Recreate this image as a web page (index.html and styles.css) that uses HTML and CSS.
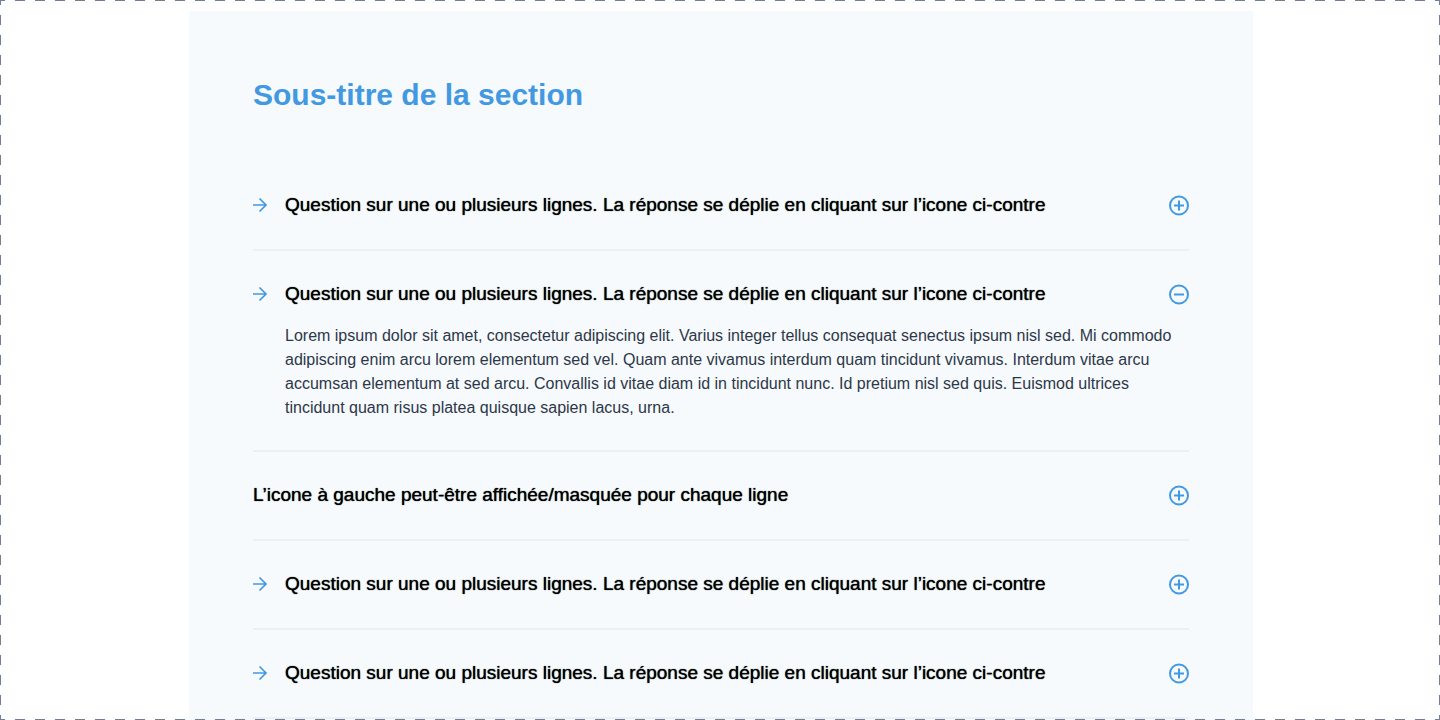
FILE: index.html
```
<!DOCTYPE html>
<html lang="fr">
<head>
  <meta charset="UTF-8">
  <meta name="viewport" content="width=device-width, initial-scale=1">
  <title>Questions / réponses</title>
  <link rel="stylesheet" href="styles.css">
</head>
<body>
  <!-- Icônes partagées -->
  <svg class="sprite" aria-hidden="true">
    <symbol id="arrow" viewBox="0 0 16 16">
      <path d="M0 8h13M6.5 1.5L13 8l-6.5 6.5"/>
    </symbol>
    <symbol id="plus" viewBox="0 0 20 21">
      <circle cx="10" cy="10.5" r="9"/>
      <path d="M5 10.5h10M10 5.5v10"/>
    </symbol>
    <symbol id="minus" viewBox="0 0 20 21">
      <circle cx="10" cy="10.5" r="9"/>
      <path d="M5 10.5h10"/>
    </symbol>
  </svg>

  <main class="frame">
    <section class="faq">
      <h2 class="faq-title">Sous-titre de la section</h2>

      <div class="faq-item">
        <button type="button" class="question" aria-expanded="false">
          <svg class="icon-arrow"><use href="#arrow"/></svg>
          <span class="question-text">Question sur une ou plusieurs lignes. La réponse se déplie en cliquant sur l’icone ci-contre</span>
          <svg class="icon-toggle"><use href="#plus"/></svg>
        </button>
      </div>

      <div class="faq-item">
        <button type="button" class="question" aria-expanded="true" aria-controls="answer-2">
          <svg class="icon-arrow"><use href="#arrow"/></svg>
          <span class="question-text">Question sur une ou plusieurs lignes. La réponse se déplie en cliquant sur l’icone ci-contre</span>
          <svg class="icon-toggle"><use href="#minus"/></svg>
        </button>
        <p class="answer" id="answer-2">Lorem ipsum dolor sit amet, consectetur adipiscing elit. Varius integer tellus consequat senectus ipsum nisl sed. Mi commodo adipiscing enim arcu lorem elementum sed vel. Quam ante vivamus interdum quam tincidunt vivamus. Interdum vitae arcu accumsan elementum at sed arcu. Convallis id vitae diam id in tincidunt nunc. Id pretium nisl sed quis. Euismod ultrices tincidunt quam risus platea quisque sapien lacus, urna.</p>
      </div>

      <!-- Ligne sans icône à gauche -->
      <div class="faq-item">
        <button type="button" class="question" aria-expanded="false">
          <span class="question-text">L’icone à gauche peut-être affichée/masquée pour chaque ligne</span>
          <svg class="icon-toggle"><use href="#plus"/></svg>
        </button>
      </div>

      <div class="faq-item">
        <button type="button" class="question" aria-expanded="false">
          <svg class="icon-arrow"><use href="#arrow"/></svg>
          <span class="question-text">Question sur une ou plusieurs lignes. La réponse se déplie en cliquant sur l’icone ci-contre</span>
          <svg class="icon-toggle"><use href="#plus"/></svg>
        </button>
      </div>

      <div class="faq-item">
        <button type="button" class="question" aria-expanded="false">
          <svg class="icon-arrow"><use href="#arrow"/></svg>
          <span class="question-text">Question sur une ou plusieurs lignes. La réponse se déplie en cliquant sur l’icone ci-contre</span>
          <svg class="icon-toggle"><use href="#plus"/></svg>
        </button>
      </div>
    </section>
  </main>
</body>
</html>
```

FILE: styles.css
```
* {
  box-sizing: border-box;
}
body {
  margin: 0;
  background-color: #fff;
  font-family: "Helvetica Neue", "Liberation Sans", Arial, sans-serif;
}
.sprite {
  display: none;
}

/* Cadre en pointillés autour de la page */
.frame {
  position: relative;
  height: 100vh;
  padding: 11px 10px 0 12px;
  overflow: hidden;
}
.frame::after {
  content: "";
  position: absolute;
  inset: 0;
  pointer-events: none;
  --dash-x: linear-gradient(90deg, #718096 5px, transparent 5px 15px, #718096 15px);
  --dash-y: linear-gradient(#718096 5px, transparent 5px 15px, #718096 15px);
  background:
    var(--dash-x) top left / 20px 1px repeat-x,
    var(--dash-x) bottom left / 20px 1px repeat-x,
    var(--dash-y) top left / 1px 20px repeat-y,
    var(--dash-y) top right / 1px 20px repeat-y;
}

.faq {
  max-width: 1064px;
  margin: 0 auto;
  padding: 64px;
  background-color: #f6fafd;
}
.faq-title {
  margin: 0 0 48px;
  color: #4299e1;
  font-size: 30px;
  line-height: 39px;
  font-weight: bold;
}
.faq-item {
  padding: 30px 0;
  border-bottom: 2px solid #ebf0f3;
}

/* Question cliquable */
.question {
  display: flex;
  align-items: flex-start;
  gap: 16px;
  width: 100%;
  padding: 0 0 2px;
  border: none;
  background: none;
  color: #000;
  font-family: inherit;
  font-size: 19px;
  line-height: 25px;
  text-align: left;
  cursor: pointer;
}
.question-text {
  flex: 1;
  text-shadow: 0 0 1px #000;
}
.icon-arrow,
.icon-toggle {
  flex: none;
  fill: none;
  stroke: #4299e1;
}
.icon-arrow {
  width: 16px;
  height: 16px;
  margin-top: 5px;
  stroke-width: 1.7;
}
.icon-toggle {
  width: 20px;
  height: 21px;
  margin-top: 3px;
  stroke-width: 2;
}

.answer {
  margin: 16px 0 0;
  padding-left: 32px;
  color: #2d3748;
  font-size: 16px;
  line-height: 24px;
}
```
